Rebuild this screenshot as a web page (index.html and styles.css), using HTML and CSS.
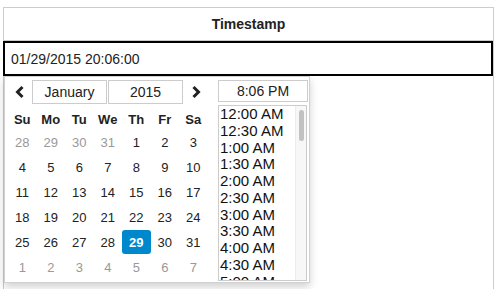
FILE: index.html
```html
<!DOCTYPE html>
<html lang="en">
<head>
    <meta charset="UTF-8">
    <title>Timestamp</title>
    <link rel="stylesheet" href="styles.css">
</head>
<body>
    <div class="grid">
        <div class="grid-head">Timestamp</div>
        <div class="grid-cell">
            <input type="text" class="stamp-input" value="01/29/2015 20:06:00">

            <!-- date/time picker popup -->
            <div class="picker">
                <div class="calendar">
                    <div class="nav">
                        <span class="arrow">
                            <svg width="10" height="14" viewBox="0 0 10 14"><polyline points="7.5,2 2.5,7 7.5,12" fill="none" stroke="#222" stroke-width="3"/></svg>
                        </span>
                        <div class="nav-box">January</div>
                        <div class="nav-box">2015</div>
                        <span class="arrow">
                            <svg width="10" height="14" viewBox="0 0 10 14"><polyline points="2.5,2 7.5,7 2.5,12" fill="none" stroke="#222" stroke-width="3"/></svg>
                        </span>
                    </div>
                    <div class="days" id="days"></div>
                </div>
                <div class="time">
                    <div class="time-box">8:06 PM</div>
                    <div class="time-list">
                        <div class="time-items" id="time-items"></div>
                        <div class="scroll-track"><div class="scroll-thumb"></div></div>
                    </div>
                </div>
            </div>
        </div>
    </div>

    <script>
        const daysEl = document.getElementById('days');
        const timeItems = document.getElementById('time-items');

        // Weekday headers
        ['Su', 'Mo', 'Tu', 'We', 'Th', 'Fr', 'Sa'].forEach(name => {
            const cell = document.createElement('div');
            cell.className = 'day-name';
            cell.innerText = name;
            daysEl.appendChild(cell);
        });

        // January 2015, starting from Sunday Dec 28
        const days = [28, 29, 30, 31];
        for (let d = 1; d <= 31; d++) days.push(d);
        for (let d = 1; d <= 7; d++) days.push(d);

        days.forEach((d, i) => {
            const cell = document.createElement('div');
            cell.className = 'day';
            if (i < 4 || i >= 35) cell.classList.add('muted');
            if (i === 32) cell.classList.add('active');
            cell.innerText = d;
            daysEl.appendChild(cell);
        });

        // Half-hour time slots
        for (let h = 0; h < 6; h++) {
            ['00', '30'].forEach(m => {
                const item = document.createElement('div');
                item.innerText = `${h === 0 ? 12 : h}:${m} AM`;
                timeItems.appendChild(item);
            });
        }
    </script>
</body>
</html>
```

FILE: styles.css
```css
* {
    box-sizing: border-box;
}

body {
    margin: 0;
    font-family: 'Liberation Sans', Arial, sans-serif;
    color: #222;
    background: white;
    overflow: hidden;
}

.grid {
    margin: 7px 0 0 3px;
    width: 491px;
    height: 282px;
    border: 1px solid #ccc;
    border-bottom: none;
}

.grid-head {
    height: 33px;
    border-bottom: 1px solid #ccc;
    display: flex;
    align-items: center;
    justify-content: center;
    font-size: 14px;
    font-weight: bold;
}

.grid-cell {
    position: relative;
}

.stamp-input {
    display: block;
    margin-left: -1px;
    width: 490px;
    height: 35px;
    border: 2px solid #000;
    padding: 0 0 0 6px;
    font-family: inherit;
    font-size: 14px;
    color: #222;
    outline: none;
}

.picker {
    position: absolute;
    top: 35px;
    left: 0;
    width: 306px;
    height: 207px;
    background: white;
    border: 1px solid rgba(0, 0, 0, 0.18);
    box-shadow: 0 4px 8px rgba(0, 0, 0, 0.18);
    padding: 3px 1px 0 3px;
    display: flex;
    gap: 10px;
}

.calendar {
    width: 200px;
}

.nav {
    display: flex;
    height: 24px;
    align-items: center;
}

.arrow {
    width: 24px;
    display: flex;
    justify-content: center;
}

.nav-box {
    width: 75px;
    height: 24px;
    margin-right: 1px;
    border: 1px solid #ccc;
    display: flex;
    align-items: center;
    justify-content: center;
    font-size: 14px;
}

.days {
    display: grid;
    grid-template-columns: repeat(7, 28.5px);
    grid-template-rows: 21px repeat(6, 25px);
    margin-top: 5px;
    font-size: 13px;
}

.day-name,
.day {
    display: flex;
    align-items: center;
    justify-content: center;
}

.day-name {
    font-weight: bold;
}

.day.muted {
    color: #999;
}

.day.active {
    background: #0088cc;
    color: white;
    font-weight: bold;
    border-radius: 3px;
    margin: 0 0 1px 0;
}

.time {
    width: 90px;
}

.time-box {
    height: 22px;
    border: 1px solid #ccc;
    display: flex;
    align-items: center;
    justify-content: center;
    font-size: 14px;
}

.time-list {
    margin-top: 3px;
    width: 89px;
    height: 176px;
    border: 1px solid #ccc;
    display: flex;
    overflow: hidden;
}

.time-items {
    flex: 1;
    padding: 0 0 0 1px;
    font-size: 15px;
    line-height: 16.75px;
    color: #111;
}

.scroll-track {
    width: 11px;
    background: #f7f7f7;
    border-left: 1px solid #ececec;
    padding: 4px 2px 0 3px;
}

.scroll-thumb {
    height: 31px;
    background: #c2c2c2;
    border-radius: 3px;
}
```
